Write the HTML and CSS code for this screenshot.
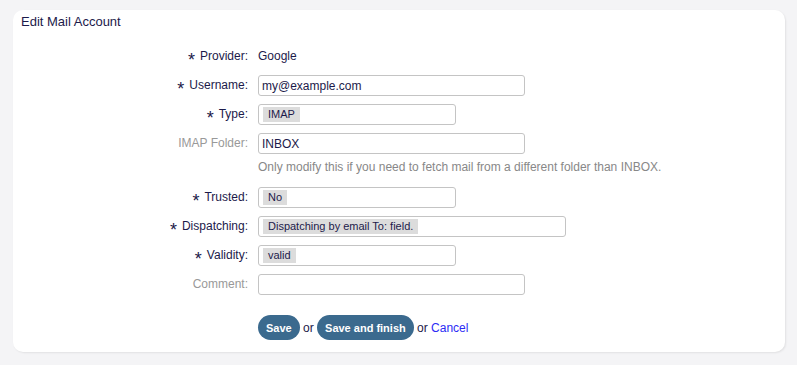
FILE: index.html
```html
<!DOCTYPE html>
<html lang="en">
  <head>
    <meta charset="UTF-8" />
    <title>Edit Mail Account</title>
    <link rel="stylesheet" href="styles.css">
  </head>
  <body>
    <div class="card">
      <h2 class="card-title">Edit Mail Account</h2>

      <form class="form-grid">
        <label class="required"><span class="star">*</span>Provider:</label>
        <div class="value">Google</div>

        <label class="required"><span class="star">*</span>Username:</label>
        <div><input type="text" class="field w-lg" value="my@example.com" /></div>

        <label class="required"><span class="star">*</span>Type:</label>
        <div class="field select w-sm"><span class="chip">IMAP</span></div>

        <label>IMAP Folder:</label>
        <div><input type="text" class="field w-lg" value="INBOX" /></div>

        <div></div>
        <p class="help">Only modify this if you need to fetch mail from a different folder than INBOX.</p>

        <label class="required"><span class="star">*</span>Trusted:</label>
        <div class="field select w-sm"><span class="chip">No</span></div>

        <label class="required"><span class="star">*</span>Dispatching:</label>
        <div class="field select w-xl"><span class="chip">Dispatching by email To: field.</span></div>

        <label class="required"><span class="star">*</span>Validity:</label>
        <div class="field select w-sm"><span class="chip">valid</span></div>

        <label>Comment:</label>
        <div><input type="text" class="field w-lg" value="" /></div>

        <div></div>
        <div class="actions">
          <button type="button" class="btn">Save</button> or
          <button type="button" class="btn">Save and finish</button> or
          <a href="#" class="cancel">Cancel</a>
        </div>
      </form>
    </div>
  </body>
</html>
```

FILE: styles.css
```css
:root {
  --page-bg: #f4f4f6;
  --text: #1c1a4a;
  --muted: #999;
  --border: #c4c4c4;
  --chip: #dcdcdc;
  --accent: #3b6a8e;
  --link: #2b2bf5;
}

* {
  box-sizing: border-box;
  margin: 0;
  padding: 0;
  font-family: "Liberation Sans", Arial, sans-serif;
}

body {
  background: var(--page-bg);
  color: var(--text);
  font-size: 12px;
  padding: 10px 12px 13px 13px;
}

.card {
  background: #fff;
  border-radius: 10px;
  box-shadow: 1px 1px 2px rgba(0, 0, 0, 0.08);
  padding: 4px 8px 12px;
  height: 342px;
}

.card-title {
  font-size: 13px;
  font-weight: normal;
  line-height: 16px;
  margin-bottom: 16px;
}

.form-grid {
  display: grid;
  grid-template-columns: 227px 1fr;
  column-gap: 10px;
  row-gap: 8px;
  align-items: center;
}

.form-grid label {
  text-align: right;
  color: var(--muted);
  line-height: 21px;
}

.form-grid label.required {
  color: var(--text);
}

.star {
  display: inline-block;
  font-size: 18px;
  vertical-align: -6px;
  line-height: 10px;
  margin-right: 5px;
}

.value {
  line-height: 21px;
}

.field {
  display: block;
  height: 21px;
  border: 1px solid var(--border);
  border-radius: 3px;
  background: #fff;
  color: var(--text);
  font-size: 12px;
  padding: 0 3px;
  outline: none;
}

.select {
  display: flex;
  align-items: center;
  padding: 0 4px;
}

.w-sm {
  width: 198px;
}

.w-lg {
  width: 267px;
}

.w-xl {
  width: 308px;
}

.chip {
  background: var(--chip);
  font-size: 11px;
  line-height: 15px;
  padding: 0 5px;
}

.help {
  color: #888;
  line-height: 20px;
  margin: -5px 0 2px;
}

.actions {
  margin-top: 12px;
  line-height: 25px;
}

.btn {
  background: var(--accent);
  color: #fff;
  border: none;
  border-radius: 13px;
  font-size: 11px;
  font-weight: bold;
  height: 25px;
  padding: 0 8px;
  cursor: pointer;
}

.cancel {
  color: var(--link);
  text-decoration: none;
}
```
